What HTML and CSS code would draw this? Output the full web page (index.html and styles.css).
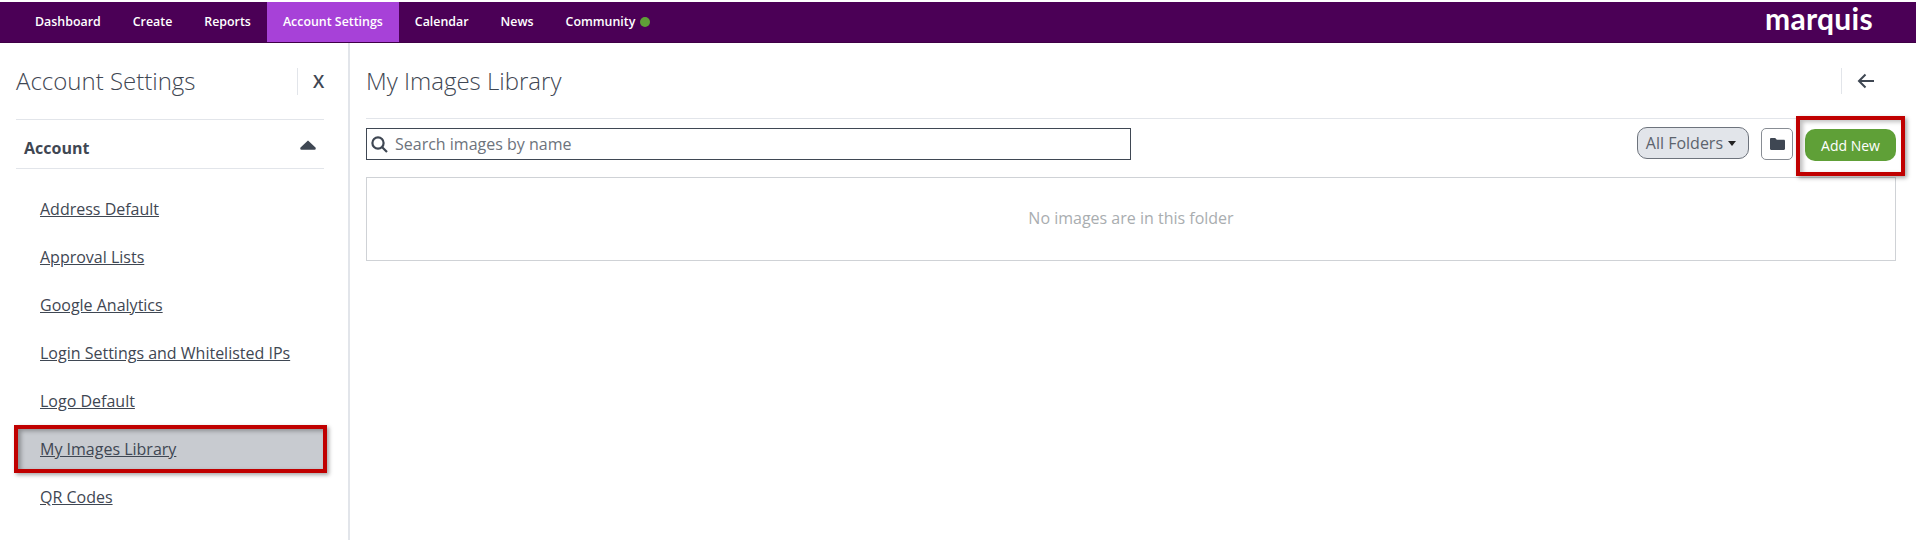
FILE: index.html
```html
<!DOCTYPE html>
<html lang="en">
<head>
<meta charset="utf-8">
<title>My Images Library</title>
<link rel="stylesheet" href="styles.css">
</head>
<body>
<header class="topbar">
  <nav class="tabs">
    <a class="tab">Dashboard</a>
    <a class="tab">Create</a>
    <a class="tab">Reports</a>
    <a class="tab tab-active">Account Settings</a>
    <a class="tab">Calendar</a>
    <a class="tab">News</a>
    <a class="tab">Community <span class="dot"></span></a>
  </nav>
  <div class="logo">marquis</div>
</header>
<div class="layout">
  <aside class="sidebar">
    <div class="side-head">
      <h2 class="side-title">Account Settings</h2>
      <button class="side-close">X</button>
    </div>
    <div class="section-head">
      <span class="section-name">Account</span>
      <svg class="caret" width="16" height="10" viewBox="0 0 16 10"><path d="M8 0.500 L15.500 7.500 Q16.300 9.700 14.500 9.700 H1.500 Q-.3 9.700 .5 7.500 Z" fill="#3f4753"/></svg>
    </div>
    <ul class="menu">
      <li class="menu-item"><a>Address Default</a></li>
      <li class="menu-item"><a>Approval Lists</a></li>
      <li class="menu-item"><a>Google Analytics</a></li>
      <li class="menu-item"><a>Login Settings and Whitelisted IPs</a></li>
      <li class="menu-item"><a>Logo Default</a></li>
      <li class="menu-item menu-selected"><a>My Images Library</a></li>
      <li class="menu-item"><a>QR Codes</a></li>
    </ul>
  </aside>
  <main class="main">
    <div class="main-head">
      <h1 class="main-title">My Images Library</h1>
      <div class="back">
        <svg width="18" height="16" viewBox="0 0 18 16" fill="none" stroke="#3f4753" stroke-width="2"><path d="M17 8H2M8.500 1.500 2 8l6.500 6.500"/></svg>
      </div>
    </div>
    <div class="toolbar">
      <div class="search">
        <svg width="17" height="17" viewBox="0 0 17 17" fill="none" stroke="#3f4753" stroke-width="2.200"><circle cx="7" cy="7" r="5.600"/><path d="M11 11l5 5"/></svg>
        <span class="search-text">Search images by name</span>
      </div>
      <div class="tools">
        <button class="folders">All Folders <span class="folders-caret"></span></button>
        <button class="folder-btn">
          <svg width="15" height="12" viewBox="0 0 15 12"><path d="M0 1.200C0 .5.500 0 1.200 0h4l1.600 1.800h7C14.500 1.800 15 2.300 15 3v7.800c0 .7-.5 1.200-1.200 1.200H1.200C.5 12 0 11.500 0 10.800z" fill="#3f4753"/></svg>
        </button>
        <button class="add-new">Add New</button>
      </div>
    </div>
    <div class="empty">No images are in this folder</div>
  </main>
</div>
</body>
</html>
```
FILE: styles.css
```css
* { box-sizing: border-box; }
html, body { margin: 0; height: 540px; overflow: hidden; background: #fff; }
body { font-family: "Open Sans", sans-serif; color: #3f4753; padding-top: 2px; }
button { font-family: inherit; }

.topbar { height: 41px; background: #4b0056; display: flex; justify-content: space-between; align-items: flex-start; padding: 0 43px 0 19px; border-bottom: 1px solid #3f0046; }
.tabs { display: flex; height: 40px; }
.tab { padding: 0 16px; line-height: 39px; height: 40px; color: #fff; font-size: 12.4px; font-weight: 600; white-space: nowrap; }
.tab-active { background: #a741d8; }
.dot { display: inline-block; width: 10px; height: 10px; border-radius: 50%; background: #5f9f37; margin-left: 1px; vertical-align: -1px; }
.logo { color: #fff; font-family: Lato, sans-serif; font-weight: 700; font-size: 30px; line-height: 30px; letter-spacing: 0.3px; margin-top: 1px; }

.layout { display: flex; height: 497px; }
.sidebar { width: 350px; border-right: 2px solid #e2e5ea; padding: 0 24px 0 16px; flex: none; }
.side-head { display: flex; align-items: center; justify-content: space-between; height: 77px; border-bottom: 1px solid #e2e5ea; }
.side-title { margin: 0; font-size: 24px; font-weight: 300; color: #3f4753; line-height: 32px; }
.side-close { border: 0; border-left: 1px solid #e2e5ea; background: none; height: 27px; width: 27px; padding: 0 0 0 15px; font-size: 18px; font-weight: 600; color: #3f4753; text-align: left; line-height: 27px; }
.section-head { height: 49px; display: flex; justify-content: space-between; align-items: center; padding: 7px 8px 0; border-bottom: 1px solid #e2e5ea; }
.section-name { font-size: 16px; font-weight: 700; }
.caret { margin-top: -5px; }
.menu { list-style: none; margin: 16px 0 0; padding: 0; }
.menu-item { height: 48px; padding-left: 24px; line-height: 48px; font-size: 16px; white-space: nowrap; }
.menu-item a { text-decoration: underline; color: #3f4753; }
.menu-selected { position: relative; background: #c8cbd0; }
.menu-selected::after { content: ""; position: absolute; left: -2px; right: -3px; top: 0; bottom: 0; border: 4px solid #c00000; box-shadow: 2px 2px 4px rgba(0,0,0,.35), inset 3px 2px 4px rgba(0,0,0,.3); }

.main { flex: 1; padding: 0 20px 0 16px; min-width: 0; }
.main-head { display: flex; justify-content: space-between; align-items: center; height: 76px; border-bottom: 1px solid #e2e5ea; }
.main-title { margin: 0; font-size: 24px; font-weight: 300; line-height: 32px; color: #3f4753; }
.back { width: 55px; height: 26px; border-left: 1px solid #e2e5ea; display: flex; align-items: center; padding-left: 15px; }
.toolbar { display: flex; justify-content: space-between; align-items: flex-start; height: 58px; padding-top: 8px; }
.search { width: 765px; height: 32px; margin-top: 1px; border: 1px solid #3f4753; display: flex; align-items: center; gap: 7px; padding-left: 4px; }
.search-text { font-size: 16px; color: #6d737c; }
.tools { display: flex; align-items: flex-start; }
.folders { width: 112px; height: 32px; border: 1px solid #6d737c; border-radius: 10px; background: #e2e5ea; color: #5c636d; font-size: 16px; padding: 0 4px 0 0; margin-right: 12px; }
.folders-caret { display: inline-block; width: 0; height: 0; border: 4px solid transparent; border-top: 5px solid #222; border-bottom: 0; margin-left: 1px; vertical-align: 3px; }
.folder-btn { width: 32px; height: 32px; margin: 1px 12px 0 0; border: 1px solid #888d94; border-radius: 5px; background: #fff; padding: 0; display: flex; align-items: center; justify-content: center; }
.add-new { position: relative; width: 91px; height: 32px; margin-top: 2px; border: 0; border-radius: 10px; background: #5fa037; color: #fff; font-size: 14px; font-weight: 500; padding: 0; }
.add-new::after { content: ""; position: absolute; left: -9px; right: -9px; top: -13px; bottom: -15px; border: 4px solid #c00000; box-shadow: 2px 2px 4px rgba(0,0,0,.35), inset 3px 2px 4px rgba(0,0,0,.25); }
.empty { height: 84px; padding-bottom: 2px; border: 1px solid #cfd2d6; display: flex; align-items: center; justify-content: center; font-size: 16px; color: #a9adb0; }
```
